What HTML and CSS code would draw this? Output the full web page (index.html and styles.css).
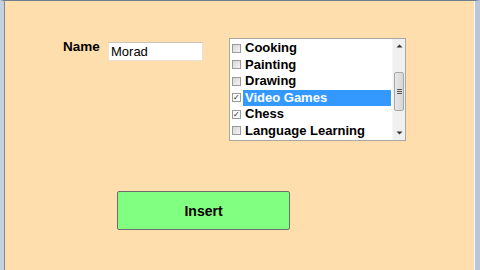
FILE: index.html
```html
<!DOCTYPE html>
<html>
<head>
<meta charset="utf-8">
<link rel="stylesheet" href="styles.css">
</head>
<body>
<div class="window">
  <div class="client">
    <div class="top-row">
      <label class="name-label">Name</label>
      <div class="textbox">Morad</div>
      <div class="listbox">
        <ul class="items">
          <li class="item"><span class="cb"></span><span class="txt">Cooking</span></li>
          <li class="item"><span class="cb"></span><span class="txt">Painting</span></li>
          <li class="item"><span class="cb"></span><span class="txt">Drawing</span></li>
          <li class="item selected"><span class="cb checked">&#10003;</span><span class="txt">Video Games</span></li>
          <li class="item"><span class="cb checked">&#10003;</span><span class="txt">Chess</span></li>
          <li class="item"><span class="cb"></span><span class="txt">Language Learning</span></li>
        </ul>
        <div class="scrollbar">
          <div class="arrow">
            <svg width="7" height="4" viewBox="0 0 7 4"><path d="M0.5 3.5 L3.5 0.5 L6.5 3.5 Z" fill="#333"/></svg>
          </div>
          <div class="track">
            <div class="thumb">
              <span class="grip"></span><span class="grip"></span><span class="grip"></span>
            </div>
          </div>
          <div class="arrow">
            <svg width="7" height="4" viewBox="0 0 7 4"><path d="M0.5 0.5 L3.5 3.5 L6.5 0.5 Z" fill="#333"/></svg>
          </div>
        </div>
      </div>
    </div>
    <div class="button-row">
      <button class="insert">Insert</button>
    </div>
  </div>
</div>
</body>
</html>
```
FILE: styles.css
```css
html, body {
  margin: 0;
  padding: 0;
  width: 480px;
  height: 270px;
  overflow: hidden;
}
body {
  font-family: "Liberation Sans", Arial, sans-serif;
}
.window {
  box-sizing: border-box;
  width: 480px;
  height: 270px;
  background: #c9d5e3;
  border-top: 1px solid #6f7d8c;
  border-left: 4px solid #c4d1e0;
  border-right: 5px solid #b9c7d8;
  display: flex;
}
.client {
  flex: 1;
  background: #ffdead;
  border-left: 1px solid #7d8b99;
  border-right: 1px solid #f3f6fa;
  padding-left: 1px;
  display: flex;
  flex-direction: column;
}
.top-row {
  display: flex;
  align-items: flex-start;
  padding-top: 37px;
  padding-left: 57px;
}
.name-label {
  font-weight: bold;
  font-size: 13.5px;
  color: #000;
  margin-top: 1px;
  width: 45px;
}
.textbox {
  box-sizing: border-box;
  width: 95px;
  height: 19px;
  margin-top: 4px;
  background: #fff;
  border: 1px solid #e6e2da;
  border-top-color: #c9c3b8;
  font-size: 13px;
  line-height: 18px;
  padding-left: 2px;
  color: #000;
}
.listbox {
  box-sizing: border-box;
  margin-left: 26px;
  width: 177px;
  height: 103px;
  background: #fff;
  border: 1px solid #a7a7a7;
  display: flex;
}
.items {
  list-style: none;
  margin: 0;
  padding: 1px 0 0 2px;
  flex: 1;
}
.item {
  display: flex;
  align-items: center;
  height: 16.5px;
}
.cb {
  box-sizing: border-box;
  width: 9px;
  height: 9px;
  border: 1px solid #9a9a9a;
  background: linear-gradient(135deg, #d6d6d6, #f4f4f4);
  font-size: 8px;
  line-height: 7px;
  text-align: center;
  color: #222;
  margin-right: 2px;
  flex: none;
}
.cb.checked {
  background: #fafafa;
}
.txt {
  font-weight: bold;
  font-size: 13px;
  color: #000;
  padding-left: 2px;
  line-height: 16.5px;
  height: 16.5px;
  flex: 1;
}
.selected .txt {
  background: #3399ff;
  color: #fff;
}
.scrollbar {
  width: 12px;
  margin-left: 1px;
  background: #f0f0f0;
  display: flex;
  flex-direction: column;
  border-left: 1px solid #f7f7f7;
}
.arrow {
  height: 14px;
  display: flex;
  align-items: center;
  justify-content: center;
}
.track {
  flex: 1;
  display: flex;
  flex-direction: column;
  padding-top: 19px;
}
.thumb {
  box-sizing: border-box;
  height: 39px;
  margin: 0 1px;
  background: linear-gradient(90deg, #e8e8e8, #d6d6d6);
  border: 1px solid #a8a8a8;
  border-radius: 2px;
  display: flex;
  flex-direction: column;
  align-items: center;
  justify-content: center;
  gap: 1px;
}
.grip {
  width: 5px;
  height: 1px;
  background: #555;
}
.button-row {
  padding-top: 50px;
  padding-left: 111px;
}
.insert {
  box-sizing: border-box;
  width: 173px;
  height: 39px;
  background: #80ff80;
  border: 1px solid #6d6d6d;
  border-radius: 2px;
  font-family: "Liberation Sans", Arial, sans-serif;
  font-weight: bold;
  font-size: 14px;
  color: #000;
  padding: 0;
  margin: 0;
}
```
